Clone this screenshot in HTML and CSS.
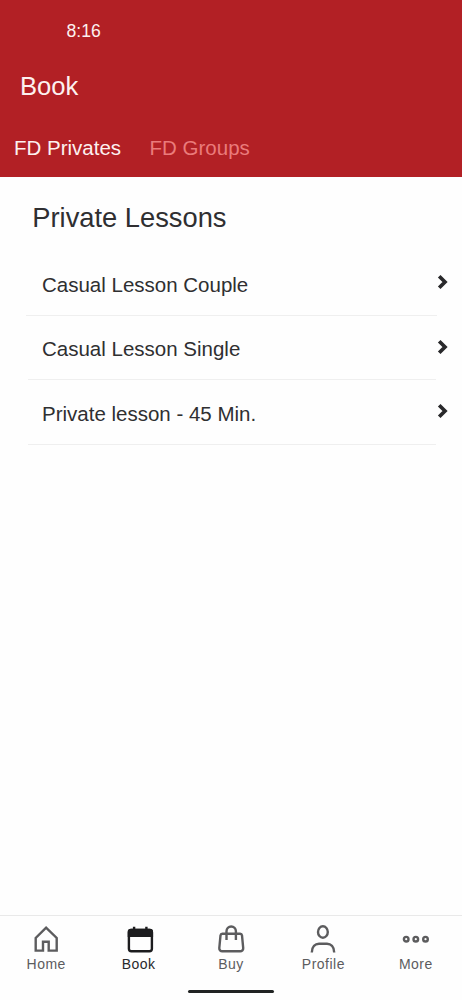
FILE: index.html
```html
<!DOCTYPE html>
<html lang="en">
<head>
<meta charset="utf-8">
<title>Book</title>
<link rel="stylesheet" href="styles.css">
</head>
<body>
<div class="app">
  <header class="header">
    <div class="status">8:16</div>
    <h1 class="title">Book</h1>
    <nav class="tabs">
      <a class="tab tab-active">FD Privates</a>
      <a class="tab">FD Groups</a>
    </nav>
  </header>
  <main class="main">
    <h2 class="heading">Private Lessons</h2>
    <ul class="list">
      <li class="row"><span>Casual Lesson Couple</span><svg class="chevron" width="12" height="16" viewBox="0 0 12 16"><path d="M2.200 2.200 8 8l-5.800 5.800"/></svg></li>
      <li class="row row-inset"><span>Casual Lesson Single</span><svg class="chevron" width="12" height="16" viewBox="0 0 12 16"><path d="M2.200 2.200 8 8l-5.800 5.800"/></svg></li>
      <li class="row row-inset"><span>Private lesson - 45 Min.</span><svg class="chevron" width="12" height="16" viewBox="0 0 12 16"><path d="M2.200 2.200 8 8l-5.800 5.800"/></svg></li>
    </ul>
  </main>
  <nav class="bottom">
    <a class="item">
      <svg class="icon" width="32" height="32" viewBox="0 0 32 32"><path d="M5.700 26.600V14L16.100 3.600 26.700 14v12.600h-8V17.800h-5.700v8.800z"/></svg>
      <span>Home</span>
    </a>
    <a class="item item-active">
      <svg class="icon icon-book" width="32" height="32" viewBox="0 0 32 32"><rect x="5.900" y="6" width="23" height="21.300" rx="2.500"/><path class="solid" d="M4.700 13V8a3.200 3.200 0 0 1 3.200-3.200h19A3.200 3.200 0 0 1 30.100 8v5z"/><path d="M11.100 2.700v4M23.400 2.700v4"/></svg>
      <span>Book</span>
    </a>
    <a class="item">
      <svg class="icon" width="32" height="32" viewBox="0 0 32 32"><path d="M7.400 9.800h17.700a1.900 1.900 0 0 1 1.900 1.600L28.200 24a3 3 0 0 1-3 3.300H7.300a3 3 0 0 1-3-3.300l1.200-12.600a1.900 1.900 0 0 1 1.900-1.600zM11.500 16V7.200a4.700 4.700 0 0 1 9.400 0V16"/></svg>
      <span>Buy</span>
    </a>
    <a class="item">
      <svg class="icon" width="32" height="32" viewBox="0 0 32 32"><ellipse cx="15.900" cy="8" rx="4.900" ry="5.700"/><path d="M4.800 28.400C4.900 22.500 8.200 19.700 12 19.700h8c3.800 0 7.100 2.800 7.200 8.700"/></svg>
      <span>Profile</span>
    </a>
    <a class="item">
      <svg class="icon" width="32" height="32" viewBox="0 0 32 32"><circle cx="6.200" cy="15.200" r="2.300"/><circle cx="15.800" cy="15.200" r="2.300"/><circle cx="25.500" cy="15.200" r="2.300"/></svg>
      <span>More</span>
    </a>
  </nav>
  <div class="gesture"><div class="pill"></div></div>
</div>
</body>
</html>
```
FILE: styles.css
```css
* { box-sizing: border-box; }
body { margin: 0; background: #fefefe; color: #2f2f31; font-family: "Liberation Sans", Arial, sans-serif; }
.app { display: flex; flex-direction: column; width: 462px; height: 1000px; }
.header { height: 177px; background: #b22025; color: #fdf1f0; }
.status { padding-left: 66.500px; font-size: 17.600px; line-height: 62px; }
.title { margin: 0; padding-left: 20px; font-size: 25.600px; font-weight: 400; line-height: 49px; }
.tabs { display: flex; gap: 28.500px; padding: 8px 0 0 14px; font-size: 20.500px; line-height: 58px; }
.tab { color: #ea7b7b; }
.tab-active { color: #fdf1f0; }
.main { flex: 1; padding-top: 4px; }
.heading { margin: 0; padding-left: 32.300px; font-size: 27.300px; font-weight: 400; line-height: 74px; }
.list { margin: 0; padding: 0; list-style: none; }
.row { display: flex; align-items: center; justify-content: space-between; height: 64.500px; padding: 3px 13px 0 42px; font-size: 20.500px; background: linear-gradient(#efefef, #efefef) 26px 100% / 411px 1px no-repeat; }
.row:first-child { margin-top: -4px; }
.row-inset { background-position: 28px 100%; background-size: 408px 1px; }
.chevron { margin-bottom: 5px; fill: none; stroke: #29292b; stroke-width: 3.700; }
.bottom { display: flex; height: 64px; padding-top: 8px; border-top: 1px solid #e9e9e9; }
.item { display: flex; flex: 1; flex-direction: column; align-items: center; color: #5c5c5e; font-size: 14px; letter-spacing: 0.500px; line-height: 16px; }
.item-active { color: #29292b; }
.icon { fill: none; stroke: currentColor; stroke-width: 2.400; }
.icon-book { color: #1c1c1e; }
.solid { fill: currentColor; stroke: none; }
.gesture { display: flex; justify-content: center; height: 21px; padding-top: 11px; }
.pill { width: 86px; height: 3px; border-radius: 2px; background: #202322; }
```
